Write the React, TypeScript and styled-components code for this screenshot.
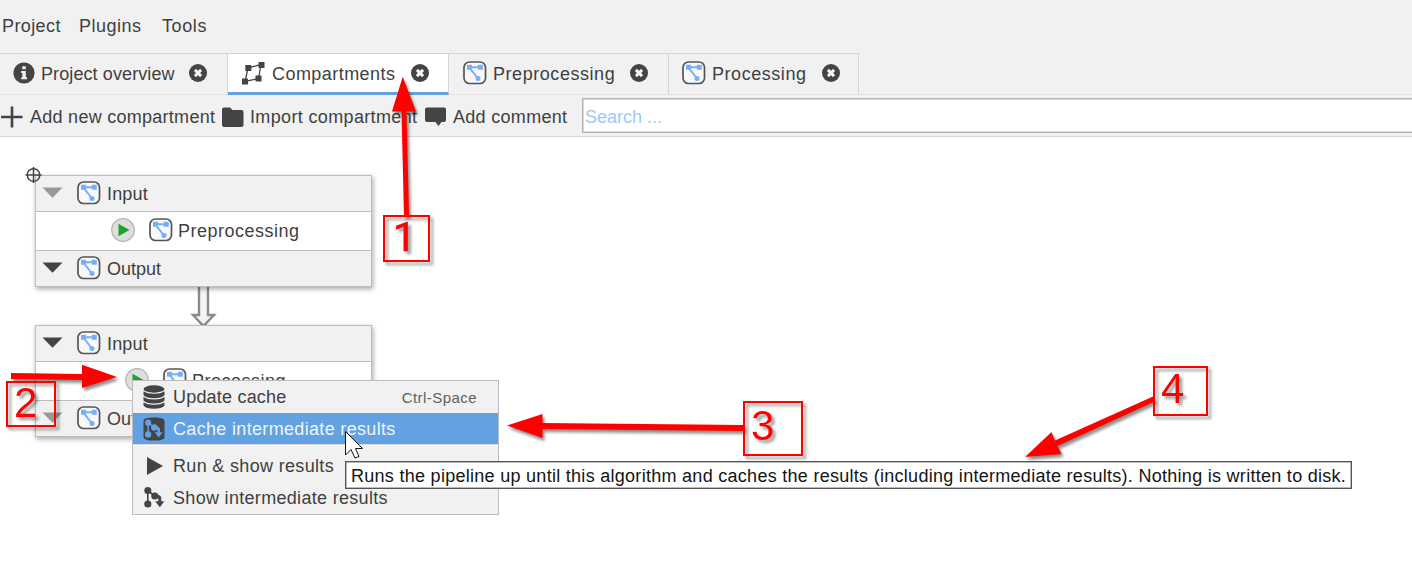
import React from "react";
import styled, { createGlobalStyle, css } from "styled-components";

const INK = "#444444";

const GlobalStyle = createGlobalStyle`
  *, *::before, *::after { box-sizing: border-box; }
  body {
    margin: 0;
    background: #ffffff;
    color: #3f3f3f;
    font: 18px/22px "Liberation Sans", Arial, sans-serif;
    overflow: hidden;
  }
  svg { display: block; flex: none; }
`;

const Window = styled.div`
  display: flex;
  flex-direction: column;
  width: 1412px;
  height: 581px;
  overflow: hidden;
`;

const Label = styled.span<{ $track?: number }>`
  white-space: pre;
  letter-spacing: ${(p) => p.$track ?? 0}px;
`;

const MenuBar = styled.nav`
  display: flex;
  height: 53px;
  padding: 15px 0 0 2px;
  background: #f1f1f1;
`;

const MenuTitle = styled(Label)<{ $width: number }>`
  width: ${(p) => p.$width}px;
`;

const TabBar = styled.div`
  display: flex;
  height: 42px;
  background: #f1f1f1;
  border-bottom: 1px solid #e4e4e4;
`;

const Tab = styled.div<{ $width: number; $pad: number; $end: number; $active?: boolean }>`
  display: flex;
  align-items: center;
  width: ${(p) => p.$width}px;
  height: 41px;
  padding: 0 ${(p) => p.$end}px 1px ${(p) => p.$pad}px;
  border: solid #d6d6d6;
  border-width: 1px 1px 0 0;
  svg { margin-bottom: 2px; }
  ${(p) =>
    p.$active &&
    css`
      height: 42px;
      padding-top: 1px;
      padding-bottom: 0;
      background: #ffffff;
      border-bottom: 3px solid #62a1e2;
    `}
`;

const TabTitle = styled(Label)<{ $gap: number }>`
  flex: 1;
  margin-left: ${(p) => p.$gap}px;
`;

const ToolBar = styled.div`
  display: flex;
  align-items: center;
  height: 42px;
  background: #f1f1f1;
  border-bottom: 1px solid #d6d6d6;
`;

const ToolButton = styled.div<{ $width: number; $gap: number }>`
  display: flex;
  align-items: center;
  width: ${(p) => p.$width}px;
  padding-top: 3px;
  gap: ${(p) => p.$gap}px;
  flex: none;
  svg { margin-bottom: 1px; }
`;

const SearchBox = styled.div`
  display: flex;
  align-items: center;
  flex: 1;
  height: 35px;
  margin: 0 -2px 0 0;
  padding: 3px 0 0 2px;
  background: #ffffff;
  border: 1px solid #b4b4b4;
  box-shadow: inset 0 0 0 1px #d8d8d8;
  color: #9dc9f8;
`;

const Canvas = styled.main`
  position: relative;
  flex: 1;
  background: #ffffff;
`;

const Placed = styled.div<{ $x: number; $y: number }>`
  position: absolute;
  left: ${(p) => p.$x}px;
  top: ${(p) => p.$y - 137}px;
`;

const NodeBox = styled(Placed)`
  width: 337px;
  height: 112px;
  border: 1px solid #bdbdbd;
  background: #ffffff;
  box-shadow: 1px 2px 5px rgba(0, 0, 0, 0.35);
  svg { margin-bottom: 2px; }
`;

const Slot = styled.div`
  display: flex;
  align-items: center;
  height: 35px;
  padding-left: 6px;
  background: #f1f1f1;
`;

const SlotIcon = styled.div`
  margin: 0 6px 0 14px;
`;

const Body = styled.div<{ $pad: number }>`
  display: flex;
  align-items: center;
  height: 40px;
  padding-left: ${(p) => p.$pad}px;
  gap: 14px;
  border: solid #bdbdbd;
  border-width: 1px 0;
`;

const BodyTitle = styled(Label)`
  margin-left: -9px;
`;

const Popup = styled(Placed)`
  width: 367px;
  height: 135px;
  background: #f1f1f1;
  border: 1px solid #bcbcc0;
`;

const Item = styled.div<{ $selected?: boolean; $split?: boolean }>`
  display: flex;
  align-items: center;
  height: 32px;
  padding: 0 21px 0 10px;
  gap: 8px;
  ${(p) =>
    p.$selected &&
    css`
      background: #62a1e2;
      color: #eef5fc;
      height: 31px;
      box-shadow: 0 1px 0 #dadada, 0 2px 0 #ffffff;
    `}
  ${(p) => p.$split && css`margin-top: 6px;`}
`;

const Shortcut = styled(Label)`
  margin-left: auto;
  font-size: 15px;
  padding-top: 1px;
  color: #606060;
`;

const Tooltip = styled(Placed)`
  width: 1007px;
  height: 28px;
  padding: 3px 0 0 5px;
  border: 1px solid #555555;
  box-shadow: inset 0 0 0 0.5px #777777;
  background: #ffffff;
  color: #141414;
`;

const Callout = styled(Placed)<{ $w: number; $h: number; $dx: number; $dy: number }>`
  width: ${(p) => p.$w}px;
  height: ${(p) => p.$h}px;
  padding: ${(p) => p.$dy}px 0 0 ${(p) => p.$dx}px;
  border: 2px solid #ff0000;
  color: #ff0000;
  font-size: 42px;
  line-height: 40px;
  filter: drop-shadow(3px 3px 1.5px rgba(0, 0, 0, 0.4));
`;

const PlainNumeral = styled.span`
  font-family: Roboto, sans-serif;
  font-size: 41px;
  -webkit-text-stroke: 0.6px #ff0000;
`;

const Overlay = styled.svg`
  position: absolute;
  left: 0;
  top: -137px;
  pointer-events: none;
`;

const ArrowGroup = styled.g`
  filter: drop-shadow(2px 3px 1.5px rgba(0, 0, 0, 0.45));
`;

const CompartmentIcon = () => (
  <svg width="24" height="24" viewBox="0 0 24 24">
    <rect x="1" y="1" width="21.500" height="21.500" rx="5.5" fill="#f8f8f8" stroke="#555555" strokeWidth="1.7" />
    <path d="M6 6.200H18M6 6.200L15 17.500" stroke="#76aefa" strokeWidth="1.900" />
    <path d="M4 3.700h5v5H4zM14.800 3.700h5v5h-5z" fill="#76aefa" />
    <circle cx="15" cy="17.600" r="2.500" fill="#76aefa" />
  </svg>
);

const CloseIcon = () => (
  <svg width="18" height="18" viewBox="0 0 18 18">
    <circle cx="9" cy="9" r="9" fill={INK} />
    <path d="M5.900 5.900L12.100 12.100M12.100 5.900L5.900 12.100" stroke="#f4f4f4" strokeWidth="2.900" />
  </svg>
);

const InfoIcon = () => (
  <svg width="22" height="22" viewBox="0 0 22 22">
    <circle cx="11" cy="11" r="10.600" fill={INK} />
    <path d="M9.300 4.300h3.500v3H9.300zM8.200 9h4.600v6.300h1.200v1.900H8.200v-1.900h1.200V11H8.200z" fill="#f1f1f1" />
  </svg>
);

const GraphIcon = () => (
  <svg width="24" height="24" viewBox="0 0 24 24">
    <path d="M7 7L20 3.500L17.500 17.500L4 20.500Z" fill="none" stroke={INK} strokeWidth="1.300" />
    <path d="M4.300 4h6v6h-6zM17.500 1h6v6h-6zM14.500 14.500h6v6h-6zM1 17.500h6v6H1z" fill={INK} />
  </svg>
);

const PlusIcon = () => (
  <svg width="23" height="22" viewBox="0 0 23 22">
    <path d="M1 11H22.500M12 0.500V21.500" stroke={INK} strokeWidth="2.600" />
  </svg>
);

const FolderIcon = () => (
  <svg width="22" height="22" viewBox="0 0 22 22">
    <path d="M0 3.500Q0 1.500 2 1.500H8L10.500 4H19.500Q21.500 4 21.500 6V19Q21.500 21 19.500 21H2Q0 21 0 19Z" fill={INK} />
  </svg>
);

const CommentIcon = () => (
  <svg width="21" height="20" viewBox="0 0 21 20">
    <path d="M2 0.500H19Q21 0.500 21 2.500V13Q21 15 19 15H16.500L13.500 19L10.500 15H2Q0 15 0 13V2.500Q0 0.500 2 0.500Z" fill={INK} />
  </svg>
);

const Chevron = ({ color = INK }: { color?: string }) => (
  <svg width="21" height="11" viewBox="0 0 21 11">
    <path d="M0.500 0.500H20.500L10.500 10.800Z" fill={color} />
  </svg>
);

const PlayButton = () => (
  <svg width="24" height="24" viewBox="0 0 24 24">
    <circle cx="12" cy="12" r="11.300" fill="#dedede" stroke="#b4b4b4" strokeWidth="1.200" />
    <path d="M7.500 5.700L18.500 12L7.500 18.300Z" fill="#22a02c" />
  </svg>
);

const DatabaseIcon = () => (
  <svg width="22" height="24" viewBox="0 0 22 24">
    <ellipse cx="11" cy="4" rx="10.500" ry="3.700" fill={INK} />
    <path d="M0.500 6.300Q4 8.800 11 8.800T21.500 6.300V10.300Q19 13.200 11 13.200T0.500 10.300ZM0.500 12Q4 14.500 11 14.500T21.500 12V15.500Q19 18.400 11 18.400T0.500 15.500ZM0.500 17.300Q4 19.800 11 19.800T21.500 17.300V20.500Q19 23.700 11 23.700T0.500 20.500Z" fill={INK} />
  </svg>
);

const Steps = ({ color }: { color: string }) => (
  <g fill={color}>
    <path d="M4.800 5V18M4.800 4.500L12 10" fill="none" stroke={color} strokeWidth="1.600" />
    <path d="M12 10.500H15Q16.800 10.500 16.800 12.500V16" fill="none" stroke={color} strokeWidth="3" />
    <circle cx="4.800" cy="4.500" r="3.500" />
    <circle cx="11.800" cy="10" r="3.600" />
    <circle cx="4.800" cy="18" r="3.600" />
    <path d="M12.200 15.300H21.300L16.800 21.300Z" />
  </g>
);

const CachedStepsIcon = () => (
  <svg width="22" height="24" viewBox="0 0 22 24">
    <path d="M0.500 4C0.500 1.200 5 0.400 11 0.400S21.500 1.200 21.500 4V20C21.500 22.800 17 23.600 11 23.600S0.500 22.800 0.500 20Z" fill={INK} />
    <g transform="translate(0.900 1.700) scale(0.880)">
      <Steps color="#62a1e2" />
    </g>
  </svg>
);

const StepsIcon = () => (
  <svg width="22" height="24" viewBox="0 0 22 24">
    <Steps color={INK} />
  </svg>
);

const RunIcon = () => (
  <svg width="22" height="24" viewBox="0 0 22 24">
    <path d="M4 3L20 12L4 21Z" fill={INK} />
  </svg>
);

type NodeProps = {
  y: number;
  name: string;
  track: number;
  pad: number;
  inputColor?: string;
  outputColor?: string;
};

const CompartmentNode = ({ y, name, track, pad, inputColor, outputColor }: NodeProps) => (
  <NodeBox $x={35} $y={y}>
    <Slot>
      <Chevron color={inputColor} />
      <SlotIcon><CompartmentIcon /></SlotIcon>
      <Label $track={0.15}>Input</Label>
    </Slot>
    <Body $pad={pad}>
      <PlayButton />
      <CompartmentIcon />
      <BodyTitle $track={track}>{name}</BodyTitle>
    </Body>
    <Slot>
      <Chevron color={outputColor} />
      <SlotIcon><CompartmentIcon /></SlotIcon>
      <Label>Output</Label>
    </Slot>
  </NodeBox>
);

export default function App() {
  return (
    <Window>
      <GlobalStyle />
      <MenuBar>
        <MenuTitle $width={77} $track={0.4}>Project</MenuTitle>
        <MenuTitle $width={83} $track={0.5}>Plugins</MenuTitle>
        <MenuTitle $width={60} $track={0.6}>Tools</MenuTitle>
      </MenuBar>
      <TabBar>
        <Tab $width={228} $pad={13} $end={20}>
          <InfoIcon />
          <TabTitle $gap={6} $track={0.1}>Project overview</TabTitle>
          <CloseIcon />
        </Tab>
        <Tab $width={221} $pad={13} $end={19} $active>
          <GraphIcon />
          <TabTitle $gap={7} $track={0.45}>Compartments</TabTitle>
          <CloseIcon />
        </Tab>
        <Tab $width={220} $pad={14} $end={20}>
          <CompartmentIcon />
          <TabTitle $gap={6} $track={0.55}>Preprocessing</TabTitle>
          <CloseIcon />
        </Tab>
        <Tab $width={190} $pad={13} $end={18}>
          <CompartmentIcon />
          <TabTitle $gap={6} $track={0.55}>Processing</TabTitle>
          <CloseIcon />
        </Tab>
      </TabBar>
      <ToolBar>
        <ToolButton $width={222} $gap={7}>
          <PlusIcon />
          <Label $track={0.27}>Add new compartment</Label>
        </ToolButton>
        <ToolButton $width={203} $gap={6}>
          <FolderIcon />
          <Label $track={0.35}>Import compartment</Label>
        </ToolButton>
        <ToolButton $width={157} $gap={7}>
          <CommentIcon />
          <Label $track={0.3}>Add comment</Label>
        </ToolButton>
        <SearchBox><Label>Search ...</Label></SearchBox>
      </ToolBar>

      <Canvas>
        <Overlay width="1412" height="581" viewBox="0 0 1412 581">
          <path d="M199 285V315H193L203.500 326L214 315H208V285" fill="#f4f4f4" stroke="#8a8a8a" strokeWidth="2.400" />
        </Overlay>
        <CompartmentNode y={175} name="Preprocessing" track={0.5} pad={75} inputColor="#999999" />
        <CompartmentNode y={325} name="Processing" track={0.5} pad={89} outputColor="#999999" />
        <Overlay width="1412" height="581" viewBox="0 0 1412 581">
          <circle cx="33.500" cy="175" r="6.300" fill="none" stroke={INK} strokeWidth="1.500" />
          <path d="M25.500 175H41.500M33.500 167V183" stroke={INK} strokeWidth="1.500" />
        </Overlay>

        <Popup $x={132} $y={380}>
          <Item>
            <DatabaseIcon />
            <Label $track={0.2}>Update cache</Label>
            <Shortcut $track={0.45}>Ctrl-Space</Shortcut>
          </Item>
          <Item $selected>
            <CachedStepsIcon />
            <Label $track={0.33}>Cache intermediate results</Label>
          </Item>
          <Item $split>
            <RunIcon />
            <Label $track={0.33}>Run &amp; show results</Label>
          </Item>
          <Item>
            <StepsIcon />
            <Label $track={0.31}>Show intermediate results</Label>
          </Item>
        </Popup>

        <Tooltip $x={345} $y={461}>
          <Label $track={0.283}>Runs the pipeline up until this algorithm and caches the results (including intermediate results). Nothing is written to disk.</Label>
        </Tooltip>

        <Overlay width="1412" height="581" viewBox="0 0 1412 581">
          <path d="M345.500 431.500V455L351 449.500L355 458L359 456.500L355.500 448.500H362.500Z" fill="#ffffff" stroke="#111122" strokeWidth="1" />
          <ArrowGroup fill="#ff0000">
            <path d="M402.700 76.700L416 111.500L406.500 111.500L409 216H404L401.500 111.500H392Z" />
            <path d="M11 373L82 374V364.700L117 377L82 388V380L11 379Z" />
            <path d="M507 425.500L542.500 414V423L744 425V431L542.500 429V438Z" />
            <path d="M1025 457L1051.500 432L1055 440.500L1153 396.500L1155 401.500L1057.500 446L1061.500 454Z" />
          </ArrowGroup>
        </Overlay>
        <Callout $x={383} $y={215} $w={47} $h={47} $dx={8} $dy={0}><PlainNumeral>1</PlainNumeral></Callout>
        <Callout $x={6} $y={381} $w={50} $h={46} $dx={6} $dy={0}>2</Callout>
        <Callout $x={743} $y={401} $w={60} $h={55} $dx={6} $dy={3}>3</Callout>
        <Callout $x={1153} $y={366} $w={55} $h={50} $dx={6} $dy={1}>4</Callout>
      </Canvas>
    </Window>
  );
}
